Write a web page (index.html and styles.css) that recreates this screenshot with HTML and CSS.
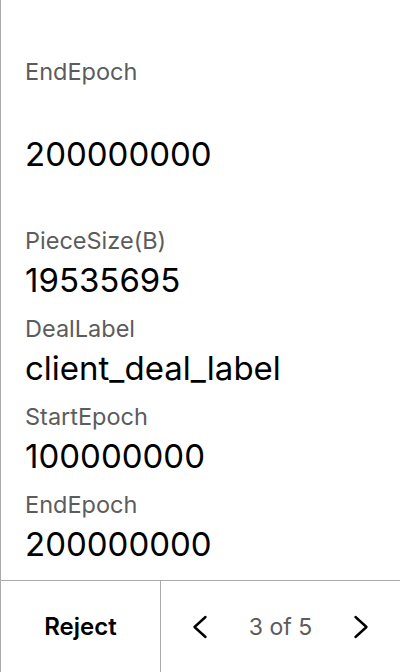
FILE: index.html
```html
<!DOCTYPE html>
<html>
<head>
<meta charset="utf-8">
<link rel="stylesheet" href="styles.css">
</head>
<body>
<div class="screen">
  <div class="content">
    <div class="field field-wide">
      <div class="label">EndEpoch</div>
      <div class="value">200000000</div>
    </div>
    <div class="fields">
      <div class="field">
        <div class="label">PieceSize(B)</div>
        <div class="value">19535695</div>
      </div>
      <div class="field">
        <div class="label">DealLabel</div>
        <div class="value">client_deal_label</div>
      </div>
      <div class="field">
        <div class="label">StartEpoch</div>
        <div class="value">100000000</div>
      </div>
      <div class="field">
        <div class="label">EndEpoch</div>
        <div class="value">200000000</div>
      </div>
    </div>
  </div>
  <div class="footer">
    <button class="reject">Reject</button>
    <div class="pager">
      <button class="nav" aria-label="Previous">
        <svg width="24" height="24" viewBox="0 0 24 24"><path d="M17.5 2 L6.5 12 L17.5 22" fill="none" stroke="#000" stroke-width="2.4" stroke-linecap="round" stroke-linejoin="round"/></svg>
      </button>
      <span class="count">3 of 5</span>
      <button class="nav" aria-label="Next">
        <svg width="24" height="24" viewBox="0 0 24 24"><path d="M6.5 2 L17.5 12 L6.5 22" fill="none" stroke="#000" stroke-width="2.4" stroke-linecap="round" stroke-linejoin="round"/></svg>
      </button>
    </div>
  </div>
</div>
</body>
</html>
```
FILE: styles.css
```css
* { box-sizing: border-box; }
html, body { margin: 0; padding: 0; background: #fff; }
body { font-family: Inter, "Noto Sans", sans-serif; color: #000; }
.screen {
  width: 400px;
  height: 672px;
  display: flex;
  flex-direction: column;
  border-left: 1px solid #ababab;
}
.content {
  flex: 1;
  overflow: hidden;
  padding: 58px 24px 0 24px;
}
.field { display: flex; flex-direction: column; }
.label { font-size: 23.5px; line-height: 28px; color: #5c5c5c; white-space: nowrap; }
.value { font-size: 33px; line-height: 40px; margin-top: 5px; color: #000; white-space: nowrap; }
.field-wide .value { margin-top: 48px; }
.fields { display: flex; flex-direction: column; gap: 15px; margin-top: 53px; }
.footer {
  height: 92px;
  border-top: 1px solid #ababab;
  display: flex;
}
.reject {
  width: 160px;
  border: none;
  border-right: 1px solid #ababab;
  background: none;
  font-family: inherit;
  font-size: 24px;
  font-weight: 600;
  color: #000;
  padding: 0;
}
.pager {
  flex: 1;
  display: flex;
  align-items: center;
  justify-content: space-between;
  padding: 0 27px 0 27px;
}
.nav {
  border: none; background: none; padding: 0;
  width: 24px; height: 24px; display: flex;
}
.count { font-size: 23px; color: #5c5c5c; }
```
